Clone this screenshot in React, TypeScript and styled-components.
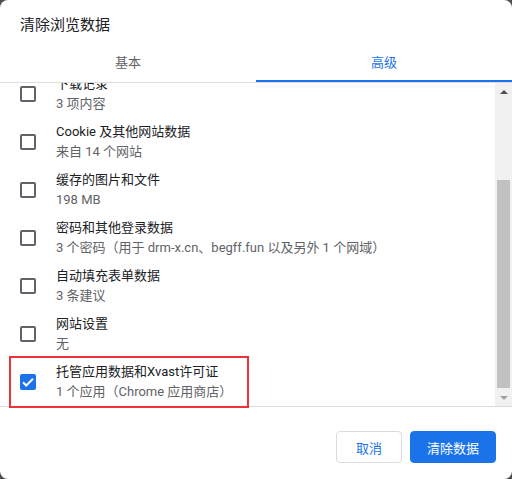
import React from "react";
import styled, { createGlobalStyle } from "styled-components";

const GlobalStyle = createGlobalStyle`
  html, body { margin: 0; padding: 0; background: #4d4d4d; }
  body { font-family: Roboto, "Noto Sans CJK SC", sans-serif; }
  * { box-sizing: border-box; }
`;

const Dialog = styled.div`
  position: relative;
  width: 512px;
  height: 479px;
  background: #fff;
  border-radius: 8px;
  display: flex;
  flex-direction: column;
  overflow: hidden;
  color: #202124;
`;

const Title = styled.div`
  height: 44px;
  padding: 15px 20px 0;
  font-size: 15px;
  line-height: 20px;
  color: #202124;
`;

const Tabs = styled.div`
  display: grid;
  grid-template-columns: 1fr 1fr;
  height: 39px;
  border-bottom: 1px solid #dadce0;
`;

const Tab = styled.div<{ $active?: boolean }>`
  position: relative;
  display: flex;
  align-items: center;
  justify-content: center;
  padding-bottom: 4px;
  font-size: 13px;
  color: ${(p) => (p.$active ? "#1a73e8" : "#5f6368")};
  &::after {
    content: "";
    position: absolute;
    left: 0;
    right: 0;
    bottom: 0;
    height: 2px;
    background: ${(p) => (p.$active ? "#1a73e8" : "transparent")};
  }
`;

const Body = styled.div`
  display: flex;
  height: 324px;
  border-bottom: 1px solid #dadce0;
`;

const List = styled.div`
  flex: 1;
  overflow: hidden;
`;

const ListInner = styled.div`
  margin-top: -13px;
`;

const Row = styled.div`
  height: 48px;
  display: flex;
  align-items: center;
  gap: 20px;
  padding-left: 20px;
`;

const Box = styled.div<{ $checked?: boolean }>`
  width: 16px;
  height: 16px;
  flex: none;
  border-radius: 2px;
  border: ${(p) => (p.$checked ? "none" : "2px solid #5f6368")};
  background: ${(p) => (p.$checked ? "#1a73e8" : "#fff")};
  display: flex;
  align-items: center;
  justify-content: center;
`;

const Texts = styled.div`
  display: flex;
  flex-direction: column;
`;

const RowTitle = styled.div`
  font-size: 13px;
  line-height: 20px;
  color: #202124;
`;

const RowSub = styled.div`
  font-size: 13px;
  line-height: 20px;
  color: #5f6368;
`;

const Scrollbar = styled.div`
  width: 17px;
  flex: none;
  background: #f1f1f1;
  display: flex;
  flex-direction: column;
  align-items: center;
`;

const Arrow = styled.div<{ $down?: boolean }>`
  height: 17px;
  width: 17px;
  display: flex;
  align-items: center;
  justify-content: center;
  &::before {
    content: "";
    border-left: 4px solid transparent;
    border-right: 4px solid transparent;
    ${(p) =>
      p.$down
        ? "border-top: 4px solid #a3a3a3;"
        : "border-bottom: 4px solid #505050;"}
  }
`;

const Track = styled.div`
  flex: 1;
  width: 100%;
  padding: 80px 2px 1px;
  display: flex;
`;

const Thumb = styled.div`
  flex: 1;
  background: #c1c1c1;
`;

const Footer = styled.div`
  flex: 1;
  display: flex;
  justify-content: flex-end;
  align-items: flex-end;
  gap: 8px;
  padding: 0 16px 16px;
`;

const Button = styled.button<{ $primary?: boolean }>`
  height: 32px;
  min-width: 66px;
  padding: 0 16px;
  border-radius: 4px;
  font-family: Roboto, "Noto Sans CJK SC", sans-serif;
  font-size: 13px;
  font-weight: 400;
  cursor: pointer;
  border: 1px solid ${(p) => (p.$primary ? "#1a73e8" : "#dadce0")};
  background: ${(p) => (p.$primary ? "#1a73e8" : "#fff")};
  color: ${(p) => (p.$primary ? "#fff" : "#1a73e8")};
`;

const Highlight = styled.div`
  position: absolute;
  left: 9px;
  top: 356px;
  width: 240px;
  height: 52px;
  border: 2px solid #f0313a;
  pointer-events: none;
`;

const items = [
  { title: "下载记录", sub: "3 项内容" },
  { title: "Cookie 及其他网站数据", sub: "来自 14 个网站" },
  { title: "缓存的图片和文件", sub: "198 MB" },
  { title: "密码和其他登录数据", sub: "3 个密码（用于 drm-x.cn、begff.fun 以及另外 1 个网域）" },
  { title: "自动填充表单数据", sub: "3 条建议" },
  { title: "网站设置", sub: "无" },
  { title: "托管应用数据和Xvast许可证", sub: "1 个应用（Chrome 应用商店）", checked: true },
];

const Check = () => (
  <svg width="14" height="14" viewBox="0 0 24 24">
    <path d="M3.5 12.5l5.5 5.5L20.5 6.5" fill="none" stroke="#fff" strokeWidth="3.4" />
  </svg>
);

export default function App() {
  return (
    <>
      <GlobalStyle />
      <Dialog>
        <Title>清除浏览数据</Title>
        <Tabs>
          <Tab>基本</Tab>
          <Tab $active>高级</Tab>
        </Tabs>
        <Body>
          <List>
            <ListInner>
              {items.map((it) => (
                <Row key={it.title}>
                  <Box $checked={it.checked}>{it.checked && <Check />}</Box>
                  <Texts>
                    <RowTitle>{it.title}</RowTitle>
                    <RowSub>{it.sub}</RowSub>
                  </Texts>
                </Row>
              ))}
            </ListInner>
          </List>
          <Scrollbar>
            <Arrow />
            <Track>
              <Thumb />
            </Track>
            <Arrow $down />
          </Scrollbar>
        </Body>
        <Footer>
          <Button>取消</Button>
          <Button $primary>清除数据</Button>
        </Footer>
        <Highlight />
      </Dialog>
    </>
  );
}
